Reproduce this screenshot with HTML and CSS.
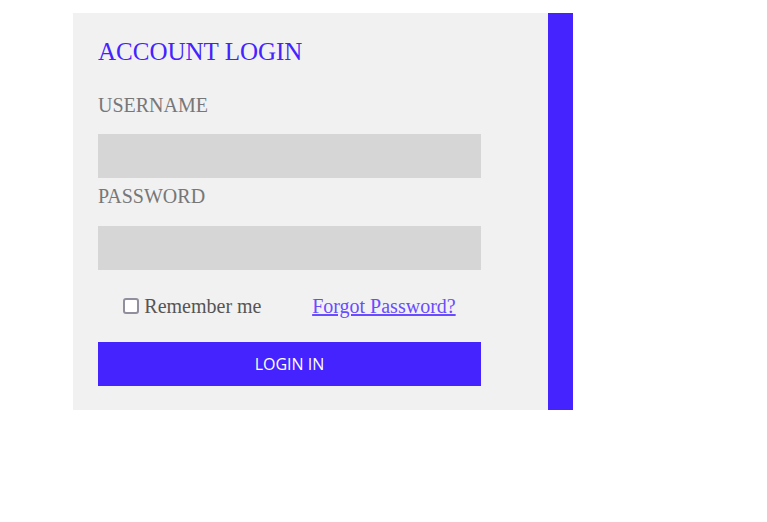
FILE: index.html
```html
<!DOCTYPE html>
<html lang="en">
<head>
<meta charset="utf-8">
<title>Account Login</title>
<link rel="stylesheet" href="styles.css">
</head>
<body>
<div class="page">
  <div class="card">
    <form class="login">
      <h2 class="title">ACCOUNT LOGIN</h2>
      <label class="label label-user" for="username">USERNAME</label>
      <input class="field field-user" id="username" type="text">
      <label class="label label-pass" for="password">PASSWORD</label>
      <input class="field field-pass" id="password" type="password">
      <div class="options">
        <label class="remember"><input class="check" type="checkbox"><span>Remember me</span></label>
        <a class="forgot" href="#">Forgot Password?</a>
      </div>
      <button class="submit" type="button">LOGIN IN</button>
    </form>
    <div class="accent"></div>
  </div>
</div>
</body>
</html>
```
FILE: styles.css
```css
html, body {
  margin: 0;
  padding: 0;
  background: #ffffff;
}

.page {
  padding: 13px 0 0 73px;
}

.card {
  display: flex;
  width: 500px;
}

.login {
  display: flex;
  flex-direction: column;
  width: 383px;
  padding: 24px 67px 24px 25px;
  background: #f1f1f1;
  font-family: "Liberation Serif", "Times New Roman", serif;
}

.accent {
  width: 25px;
  background: #4423ff;
}

.title {
  margin: 0;
  font-size: 25px;
  line-height: 30px;
  font-weight: normal;
  color: #4423ff;
}

.label {
  font-size: 20px;
  line-height: 24px;
  color: #777777;
}

.label-user {
  margin-top: 25.5px;
}

.label-pass {
  margin-top: 5.5px;
}

.field {
  box-sizing: border-box;
  width: 383px;
  height: 44px;
  margin: 0;
  border: none;
  background: #d6d6d6;
  outline: none;
}

.field-user {
  margin-top: 17.5px;
}

.field-pass {
  margin-top: 18.5px;
}

.options {
  display: flex;
  justify-content: space-around;
  align-items: center;
  margin-top: 24px;
  height: 24px;
  font-size: 20px;
  line-height: 24px;
}

.remember {
  display: flex;
  align-items: center;
  gap: 5px;
  color: #555555;
}

.check {
  appearance: none;
  -webkit-appearance: none;
  box-sizing: border-box;
  width: 16px;
  height: 16px;
  margin: 0;
  border: 2px solid #8f8f9d;
  border-radius: 3px;
  background: #ffffff;
}

.forgot {
  color: #6a4cff;
  text-decoration: underline;
}

.submit {
  margin-top: 24px;
  height: 44px;
  width: 383px;
  border: none;
  background: #4423ff;
  color: #ffffff;
  font-family: "Open Sans", sans-serif;
  font-size: 16px;
  line-height: 20px;
  padding: 0;
}
```
